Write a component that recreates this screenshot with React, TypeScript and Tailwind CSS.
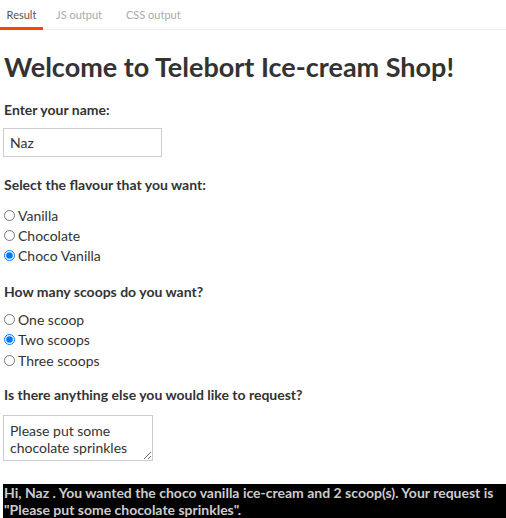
import { useState } from "react";

const flavours = ["Vanilla", "Chocolate", "Choco Vanilla"];
const scoops = ["One scoop", "Two scoops", "Three scoops"];

export default function App() {
  const [name, setName] = useState("Naz");
  const [flavour, setFlavour] = useState("Choco Vanilla");
  const [scoop, setScoop] = useState("Two scoops");
  const [request, setRequest] = useState("Please put some chocolate sprinkles");

  const count = scoops.indexOf(scoop) + 1;

  return (
    <div className="w-[506px] h-[518px] overflow-hidden bg-white font-['Lato',sans-serif] text-[#333]">
      {/* tabs */}
      <div className="flex h-[30px] border-b border-[#eee] text-[11px]">
        <div className="w-[43px] border-b-[3px] border-[#ff4400] pt-[7px] text-center text-[#555] -mb-px">Result</div>
        <div className="pl-[13px] pt-[7px] text-[#aaa]">JS output</div>
        <div className="pl-[24px] pt-[7px] text-[#aaa]">CSS output</div>
      </div>

      <div className="pl-[4px]">
        <h1 className="mt-[20px] text-[27px] font-bold leading-[34px]">Welcome to Telebort Ice-cream Shop!</h1>

        <p className="mt-[15px] text-[14px] font-bold">Enter your name:</p>
        <input
          value={name}
          onChange={(e) => setName(e.target.value)}
          className="mt-[8px] -ml-px block h-[29px] w-[159px] border border-[#ccc] px-[6px] text-[14px] outline-none"
        />

        <p className="mt-[17px] text-[14px] font-bold">Select the flavour that you want:</p>
        <div className="mt-[10px] flex flex-col">
          {flavours.map((f) => (
            <label key={f} className="flex h-[20px] items-center gap-[3px] text-[14px]">
              <input
                type="radio"
                name="flavour"
                checked={flavour === f}
                onChange={() => setFlavour(f)}
                className="m-0 h-[11px] w-[11px] accent-[#0075ff]"
              />
              {f}
            </label>
          ))}
        </div>

        <p className="mt-[16px] text-[14px] font-bold">How many scoops do you want?</p>
        <div className="mt-[7px] flex flex-col">
          {scoops.map((s) => (
            <label key={s} className="flex h-[20.5px] items-center gap-[3px] text-[14px]">
              <input
                type="radio"
                name="scoop"
                checked={scoop === s}
                onChange={() => setScoop(s)}
                className="m-0 h-[11px] w-[11px] accent-[#0075ff]"
              />
              {s}
            </label>
          ))}
        </div>

        <p className="mt-[13px] text-[14px] font-bold">Is there anything else you would like to request?</p>
        <textarea
          value={request}
          onChange={(e) => setRequest(e.target.value)}
          className="mt-[10px] -ml-px block h-[46px] w-[150px] border border-[#ccc] px-[6px] py-[6px] text-[14px] leading-[17px] outline-none"
        />

        <div className="mt-[23px] -ml-px border-b-2 border-[#777] bg-black pl-[1px] text-[14px] font-bold leading-[17px] text-[#ccc]">
          Hi, {name} . You wanted the {flavour.toLowerCase()} ice-cream and {count} scoop(s). Your request is "{request}".
        </div>
      </div>
    </div>
  );
}
